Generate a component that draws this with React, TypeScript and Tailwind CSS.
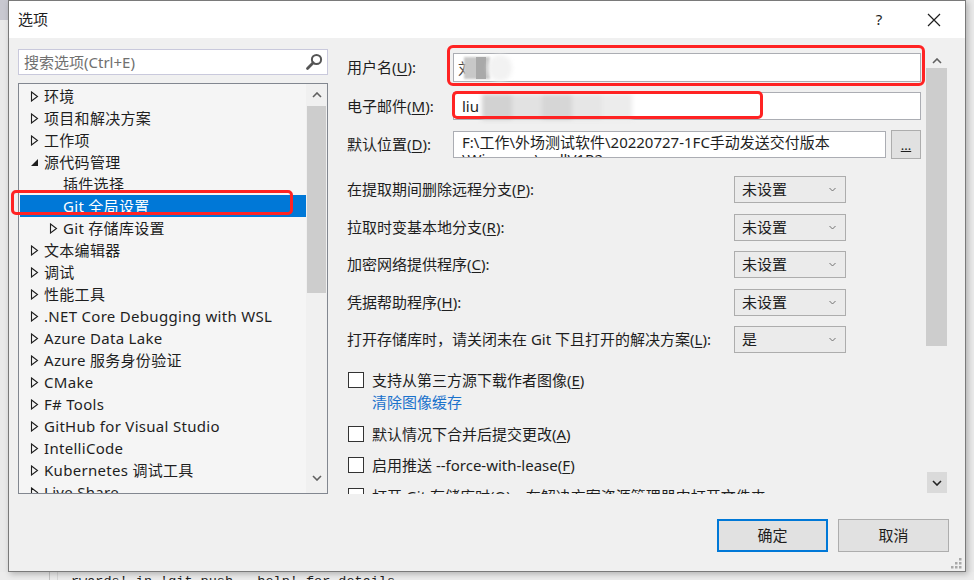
import React from "react";

const font = "font-['Noto_Sans','Noto_Sans_CJK_SC',sans-serif]";

type Node = { label: string; level: number; arrow: "closed" | "open" | "none"; selected?: boolean };

const tree: Node[] = [
  { label: "环境", level: 0, arrow: "closed" },
  { label: "项目和解决方案", level: 0, arrow: "closed" },
  { label: "工作项", level: 0, arrow: "closed" },
  { label: "源代码管理", level: 0, arrow: "open" },
  { label: "插件选择", level: 1, arrow: "none" },
  { label: "Git 全局设置", level: 1, arrow: "none", selected: true },
  { label: "Git 存储库设置", level: 1, arrow: "closed" },
  { label: "文本编辑器", level: 0, arrow: "closed" },
  { label: "调试", level: 0, arrow: "closed" },
  { label: "性能工具", level: 0, arrow: "closed" },
  { label: ".NET Core Debugging with WSL", level: 0, arrow: "closed" },
  { label: "Azure Data Lake", level: 0, arrow: "closed" },
  { label: "Azure 服务身份验证", level: 0, arrow: "closed" },
  { label: "CMake", level: 0, arrow: "closed" },
  { label: "F# Tools", level: 0, arrow: "closed" },
  { label: "GitHub for Visual Studio", level: 0, arrow: "closed" },
  { label: "IntelliCode", level: 0, arrow: "closed" },
  { label: "Kubernetes 调试工具", level: 0, arrow: "closed" },
  { label: "Live Share", level: 0, arrow: "closed" },
];

const Arrow = ({ kind }: { kind: Node["arrow"] }) => {
  if (kind === "none") return null;
  if (kind === "open")
    return (
      <svg width="9" height="11" viewBox="0 0 9 11">
        <path d="M8 2 L8 9 L1 9 Z" fill="#1e1e1e" />
      </svg>
    );
  return (
    <svg width="9" height="11" viewBox="0 0 9 11">
      <path d="M1.5 1 L7.5 5.5 L1.5 10 Z" fill="none" stroke="#1e1e1e" strokeWidth="1.1" />
    </svg>
  );
};

const Chevron = ({ up, color = "#606060", size = 10 }: { up?: boolean; color?: string; size?: number }) => (
  <svg width={size} height={size * 0.6} viewBox="0 0 10 6">
    {up ? (
      <path d="M1 5 L5 1 L9 5" fill="none" stroke={color} strokeWidth="1.6" />
    ) : (
      <path d="M1 1 L5 5 L9 1" fill="none" stroke={color} strokeWidth="1.6" />
    )}
  </svg>
);

const Key = ({ k }: { k: string }) => (
  <>
    (<span className="underline underline-offset-2">{k}</span>):
  </>
);

const Select = ({ value }: { value: string }) => (
  <div className="w-[112px] h-[27px] border border-[#adadad] bg-[#ebebeb] flex items-center justify-between pl-[7px] pr-[9px]">
    <span>{value}</span>
    <svg width="7" height="5" viewBox="0 0 7 5">
      <path d="M0.5 1 L3.5 4 L6.5 1" fill="none" stroke="#707070" strokeWidth="1" />
    </svg>
  </div>
);

const Check = ({ children }: { children: React.ReactNode }) => (
  <div className="flex items-center h-[22px]">
    <div className="w-[16px] h-[16px] border border-[#333] bg-white ml-[1px] mr-[8px]" />
    <span>{children}</span>
  </div>
);

const selects = [
  { label: "在提取期间删除远程分支", k: "P", v: "未设置" },
  { label: "拉取时变基本地分支", k: "R", v: "未设置" },
  { label: "加密网络提供程序", k: "C", v: "未设置" },
  { label: "凭据帮助程序", k: "H", v: "未设置" },
  { label: "打开存储库时，请关闭未在 Git 下且打开的解决方案", k: "L", v: "是" },
];

export default function App() {
  return (
    <div className={`relative w-[974px] h-[580px] overflow-hidden bg-[#eaeaea] text-[15px] text-[#1e1e1e] ${font}`}>
      {/* desktop behind the dialog */}
      <div className="absolute left-0 top-0 w-[8px] h-[20px] bg-[#c8c8d0]" />
      <div className="absolute left-0 right-0 top-[572px] bottom-0 bg-[#ececec]">
        <div className="absolute left-[49px] top-0 bottom-0 w-px bg-[#c4c4c4]" />
        <div className="absolute left-[57px] top-0 bottom-0 w-px bg-[#d8d8d8]" />
        <div className="absolute left-[71px] top-[3px] whitespace-nowrap font-['Liberation_Mono',monospace] text-[13.5px] leading-none text-[#222]">
          rwards' in 'git push --help' for details.
        </div>
      </div>

      {/* dialog */}
      <div className="absolute left-[8px] top-0 w-[958px] h-[572px] border border-[#7a7a7a] bg-[#f0f0f0] flex flex-col shadow-[2px_2px_6px_rgba(0,0,0,0.25)]">
        {/* title bar */}
        <div className="h-[37px] bg-white flex items-center pl-[9px] shrink-0">
          <span className="flex-1">选项</span>
          <span className="w-[20px] text-center mr-[38px]">?</span>
          <svg width="14" height="14" viewBox="0 0 14 14" className="mr-[24px]">
            <path d="M1 1 L13 13 M13 1 L1 13" stroke="#1e1e1e" strokeWidth="1.2" />
          </svg>
        </div>

        {/* body */}
        <div className="flex h-[456px] shrink-0">
          {/* left column */}
          <div className="w-[310px] ml-[9px] pt-[11px] flex flex-col shrink-0">
            <div className="h-[26px] border border-[#c9c9dc] bg-white flex items-center pl-[5px] pr-[4px]">
              <span className="flex-1 text-[#707070]">搜索选项(Ctrl+E)</span>
              <svg width="18" height="18" viewBox="0 0 18 18">
                <circle cx="11.5" cy="6.5" r="4.6" fill="none" stroke="#555" strokeWidth="2" />
                <path d="M8.2 9.8 L2.5 15.5" stroke="#555" strokeWidth="2.8" strokeLinecap="round" />
              </svg>
            </div>
            <div className="mt-[8px] h-[411px] border border-[#828790] bg-[#f5f5f5] flex overflow-hidden">
              <div className="flex-1 pt-[1px] overflow-hidden tracking-[0.3px]">
                {tree.map((n) => (
                  <div
                    key={n.label}
                    className={`h-[22px] flex items-center ml-[1px] whitespace-nowrap ${n.selected ? "bg-[#0078d7] text-white" : ""}`}
                    style={{ paddingLeft: 10 + n.level * 19 }}
                  >
                    <span className="w-[14px] flex items-center">
                      <Arrow kind={n.arrow} />
                    </span>
                    <span>{n.label}</span>
                  </div>
                ))}
              </div>
              <div className="w-[21px] bg-[#f0f0f0] flex flex-col items-center shrink-0">
                <div className="h-[22px] flex items-center justify-center">
                  <Chevron up />
                </div>
                <div className="w-[19px] h-[187px] bg-[#cdcdcd]" />
                <div className="flex-1" />
                <div className="h-[22px] flex items-center justify-center mb-[4px]">
                  <Chevron />
                </div>
              </div>
            </div>
          </div>

          {/* right column */}
          <div className="w-[589px] ml-[9px] pl-[10px] pr-[5px] pt-[15px] overflow-hidden shrink-0">
            <div className="flex items-center h-[29px]">
              <span className="w-[106px]">
                用户名<Key k="U" />
              </span>
              <div className="relative flex-1 h-full border border-[#abadb3] bg-white">
                <span className="absolute left-[4px] top-[3px] text-[#444]">刘</span>
                <div className="absolute left-[10px] top-[3px] w-[26px] h-[22px] bg-[#c8c8c8] blur-[1px]" />
                <div className="absolute left-[22px] top-[3px] w-[10px] h-[22px] bg-[#a9a9a9]" />
                <div className="absolute left-[34px] top-[1px] w-[24px] h-[26px] bg-[#f2f2f2] rounded-full blur-[2px]" />
              </div>
            </div>
            <div className="flex items-center h-[28px] mt-[10px]">
              <span className="w-[106px]">
                电子邮件<Key k="M" />
              </span>
              <div className="relative flex-1 h-full border border-[#abadb3] bg-white pl-[8px] flex items-center">
                <span>liu</span>
                <div className="absolute left-[28px] top-[1px] w-[150px] h-[26px] flex blur-[2px]">
                  <div className="w-[30px] bg-[#d2d2d2]" />
                  <div className="w-[30px] bg-[#e2e2e2]" />
                  <div className="w-[30px] bg-[#d6d6d6]" />
                  <div className="w-[30px] bg-[#e6e6e6]" />
                  <div className="w-[30px] bg-[#ececec]" />
                </div>
              </div>
            </div>
            <div className="flex items-center h-[28px] mt-[10px]">
              <span className="w-[106px]">
                默认位置<Key k="D" />
              </span>
              <div className="w-[433px] h-[27px] border border-[#abadb3] bg-white pl-[8px] pt-[2px] overflow-hidden leading-[17px] whitespace-nowrap">
                <div>F:\工作\外场测试软件\20220727-1FC手动发送交付版本</div>
                <div>\Winmm...\mdlV1R2</div>
              </div>
              <div className="ml-[5px] w-[30px] h-[29px] border border-[#adadad] bg-[#e1e1e1] flex items-end justify-center pb-[6px] leading-none">
                <span className="underline text-[13px]">...</span>
              </div>
            </div>

            <div className="mt-[18px] flex flex-col gap-[10.5px]">
              {selects.map((s) => (
                <div key={s.k} className="flex items-center">
                  <span className="w-[387px] whitespace-nowrap">
                    {s.label}
                    <Key k={s.k} />
                  </span>
                  <Select value={s.v} />
                </div>
              ))}
            </div>

            <div className="mt-[16px]">
              <Check>
                支持从第三方源下载作者图像(<span className="underline underline-offset-2">E</span>)
              </Check>
              <div className="h-[22px] pl-[25px] flex items-center text-[#1a72cc]">清除图像缓存</div>
              <div className="mt-[10px]">
                <Check>
                  默认情况下合并后提交更改(<span className="underline underline-offset-2">A</span>)
                </Check>
              </div>
              <div className="mt-[9px]">
                <Check>
                  启用推送 --force-with-lease(<span className="underline underline-offset-2">F</span>)
                </Check>
              </div>
              <div className="mt-[9px] whitespace-nowrap">
                <Check>
                  打开 Git 存储库时(<span className="underline underline-offset-2">O</span>)，在解决方案资源管理器中打开文件夹
                </Check>
              </div>
            </div>
          </div>

          {/* right scrollbar */}
          <div className="w-[21px] flex flex-col items-center pt-[15px] shrink-0">
            <div className="h-[15px] flex items-center justify-center">
              <Chevron up />
            </div>
            <div className="w-[21px] h-[278px] bg-[#cdcdcd]" />
            <div className="flex-1" />
            <div className="w-[20px] h-[21px] bg-[#dadada] flex items-center justify-center mb-[1px]">
              <Chevron color="#222" />
            </div>
          </div>
        </div>

        {/* buttons */}
        <div className="relative flex-1 flex justify-end items-start pt-[25px] pr-[16px] gap-[10px]">
          <button className="w-[111px] h-[33px] border-2 border-[#0078d7] bg-[#e1e1e1]">确定</button>
          <button className="w-[111px] h-[33px] border border-[#adadad] bg-[#e1e1e1]">取消</button>
          <svg width="12" height="12" viewBox="0 0 12 12" className="absolute right-[3px] bottom-[2px]">
            {[
              [9, 1],
              [9, 5],
              [5, 5],
              [9, 9],
              [5, 9],
              [1, 9],
            ].map(([x, y]) => (
              <rect key={`${x}-${y}`} x={x} y={y} width="2.5" height="2.5" fill="#a8a8a8" />
            ))}
          </svg>
        </div>
      </div>

      {/* red annotation boxes */}
      <div className="absolute left-[11px] top-[190px] w-[282px] h-[25px] border-[3px] border-[#ff2323] rounded-[5px]" />
      <div className="absolute left-[447px] top-[45px] w-[478px] h-[41px] border-[3px] border-[#ff2323] rounded-[6px]" />
      <div className="absolute left-[452px] top-[91px] w-[311px] h-[28px] border-[3px] border-[#ff2323] rounded-[5px]" />
    </div>
  );
}
